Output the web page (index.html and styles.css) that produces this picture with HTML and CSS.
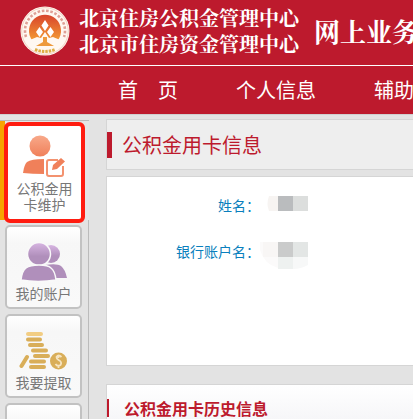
FILE: index.html
```html
<!DOCTYPE html>
<html lang="zh-CN">
<head>
<meta charset="utf-8">
<meta name="viewport" content="width=device-width, initial-scale=1">
<title>公积金用卡信息</title>
<link rel="stylesheet" href="styles.css">
</head>
<body>
<header class="header">
  <div class="brand">
    <svg class="logo" viewBox="0 0 50 50" aria-hidden="true">
      <defs>
        <linearGradient id="sun" x1="0" y1="0" x2="0" y2="1">
          <stop offset="0" stop-color="#d8432c"/>
          <stop offset="1" stop-color="#f39a35"/>
        </linearGradient>
      </defs>
      <circle cx="25" cy="25" r="24.5" fill="#fff8f2"/>
      <circle cx="25" cy="25" r="23.3" fill="none" stroke="#e8b9a0" stroke-width=".6"/>
      <path d="M6 31A20 20 0 1 1 44 31" fill="none" stroke="#dfa096" stroke-width="2.600" stroke-dasharray="2.6 1.7"/>
      <path d="M12 34A16 16 0 1 1 38 34Z" fill="url(#sun)"/>
      <path d="M25 14l3.600 5.500L25 25l-3.600-5.500zM19.500 21l3.500 5-3.500 5-3.500-5zM30.500 21l3.500 5-3.500 5-3.500-5z" fill="#fff"/>
      <path d="M25 26l4 6 4-1 12 5-9 7H14l-9-7 12-5 4 1z" fill="#fff8f2"/>
      <path d="M23 31h4v5l7 4H16l7-4z" fill="#ee9a3c"/>
      <path d="M15 43.500q10 4 20 0" fill="none" stroke="#dfae45" stroke-width="3" stroke-dasharray="2.500 1"/>
    </svg>
    <div class="org"><span>北京住房公积金管理中心</span><span>北京市住房资金管理中心</span></div>
    <div class="system">网上业务平台</div>
  </div>
  <nav class="nav">
    <a href="#">首　页</a>
    <a href="#">个人信息</a>
    <a href="#">辅助功能</a>
  </nav>
</header>
<div class="layout">
  <aside class="sidebar">
    <div class="active-tab">
      <a class="item current" href="#">
        <svg class="icon" viewBox="0 0 48 46" aria-hidden="true">
          <defs>
            <linearGradient id="orange" x1="0" y1="0" x2="0" y2="1">
              <stop offset="0" stop-color="#f8a98a"/>
              <stop offset="1" stop-color="#f0805a"/>
            </linearGradient>
          </defs>
          <circle cx="21" cy="14" r="10.500" fill="url(#orange)"/>
          <path d="M4 41q1-8 4-11 4-3 17-3v15q-12 0-21-1z" fill="#f0805a"/>
          <path d="M39 28H30q-2 0-2 2v12q0 2 2 2h12q2 0 2-2v-8" fill="none" stroke="#f3926f" stroke-width="2"/>
          <path d="M33 38l1-5 8-7 4 3.500-8 7.500z" fill="#f0805a"/>
        </svg>
        <span>公积金用<br>卡维护</span>
      </a>
    </div>
    <a class="item" href="#">
      <svg class="icon" viewBox="0 0 48 46" aria-hidden="true">
        <defs>
          <linearGradient id="purple" x1="0" y1="0" x2="0" y2="1">
            <stop offset="0" stop-color="#d7b5e2"/>
            <stop offset=".6" stop-color="#b08fbb"/>
          </linearGradient>
        </defs>
        <circle cx="32" cy="15" r="9" fill="url(#purple)"/>
        <path d="M26 26q12-2 16 1 4 3 6 12H30z" fill="#b08fbb"/>
        <circle cx="20" cy="15" r="11.500" fill="url(#purple)" stroke="#f9f9f9" stroke-width="1.500"/>
        <path d="M2 41q1-9 5-12 4-3 13-3t12 3q4 3 5 12-18 3-35 0z" fill="#b08fbb" stroke="#f9f9f9" stroke-width="1.500"/>
      </svg>
      <span>我的账户</span>
    </a>
    <a class="item" href="#">
      <svg class="icon" viewBox="0 0 48 46" aria-hidden="true">
        <g fill="none" stroke="#d9ae59" stroke-width="4" stroke-linecap="round">
          <path d="M9 6h13" stroke="#f2cd83"/>
          <path d="M9 11.500h12M11 17h12M14 22.500h13M16 28h13M12 33.500h13M12 39h13M8 29L2.500 38"/>
        </g>
        <circle cx="39.500" cy="33" r="8.500" fill="#d9ae59"/>
        <path d="M42.500 29q-3-3-5 0 0 2 2 3 4 2 2 5-3 2-5-1M39.500 27v3M39.500 37v3" fill="none" stroke="#f6e5c3" stroke-width="1.800"/>
      </svg>
      <span>我要提取</span>
    </a>
    <a class="item" href="#" aria-label="更多"></a>
  </aside>
  <main class="main">
    <section class="panel heading"><h1>公积金用卡信息</h1></section>
    <section class="panel details">
      <dl>
        <dt>姓名：</dt>
        <dd><svg class="mask" viewBox="0 0 48 27" aria-hidden="true"><path d="M9 0h9v15H9q-3-7 0-15z" fill="#f7f4f2"/><path d="M18 0h15v15H18z" fill="#babcbe"/><path d="M33 0h15v15H33z" fill="#dcdedd"/></svg></dd>
        <dt>银行账户名：</dt>
        <dd><svg class="mask" viewBox="0 0 48 27" aria-hidden="true"><path d="M0 0h18v26Q4 22 0 8z" fill="#fbfafa"/><path d="M3 0h15v15H3z" fill="#f8f6f5"/><path d="M18 0h15v15H18z" fill="#cacbcb"/><path d="M33 0h15v15H33z" fill="#e3e6e5"/><path d="M18 15h15v12H18z" fill="#eef1f0"/><path d="M33 15h15v8q-7 4-15 4z" fill="#f7f8f8"/></svg></dd>
      </dl>
    </section>
    <section class="panel history"><h2>公积金用卡历史信息</h2></section>
  </main>
</div>
</body>
</html>
```
FILE: styles.css
```css
* {
  box-sizing: border-box;
}

body {
  margin: 0;
  height: 100vh;
  overflow: hidden;
  display: flex;
  flex-direction: column;
  background: #e3e3e3;
  font-family: "Noto Sans CJK SC", sans-serif;
  font-size: 14px;
}

a {
  color: inherit;
  text-decoration: none;
}

h1, h2, dl, dd {
  margin: 0;
}

.header {
  flex: none;
  overflow: hidden;
  background: #bd1a2d;
  color: #fff;
  white-space: nowrap;
}

.brand {
  display: flex;
  align-items: center;
  height: 66px;
  padding: 0 0 4px 20px;
  border-bottom: 1px solid #fff;
}

.logo {
  flex: none;
  width: 50px;
  height: 50px;
}

.org {
  display: flex;
  flex-direction: column;
  margin-left: 9px;
  font-family: "Noto Serif CJK SC", "Noto Sans CJK SC", serif;
  font-size: 20px;
  font-weight: 700;
  line-height: 26px;
}

.system {
  margin-left: 15px;
  font-family: "Noto Serif CJK SC", "Noto Sans CJK SC", serif;
  font-size: 26px;
  font-weight: 700;
  line-height: 36px;
}

.nav {
  display: flex;
  gap: 58px;
  padding-left: 118px;
  font-size: 20px;
  line-height: 48px;
}

.layout {
  flex: 1 0 auto;
  display: flex;
  border-top: 1px solid #d0d0d0;
}

.sidebar {
  flex: none;
  width: 89px;
  margin-top: 5px;
  border-top: 1px solid #bbb;
  border-right: 1px solid #bbb;
}

.active-tab {
  width: 89px;
  height: 99px;
  margin-bottom: 5px;
  background: linear-gradient(to right, #f7a400 5px, #e5e5e5 5px);
  padding: 1px 4px 0 4px;
}

.item {
  display: flex;
  flex-direction: column;
  align-items: center;
  height: 84px;
  margin: 0 6px 5px 5px;
  padding-top: 12px;
  border: 2px solid #c2c2c2;
  border-radius: 5px;
  background: linear-gradient(#fff, #f7f7f7 20%, #f9f9f9);
  color: #777;
  line-height: 16px;
  text-align: center;
}

.item.current {
  height: 101px;
  margin: 0;
  padding-top: 6px;
  border: 4px solid #ff1c10;
  border-radius: 6px;
  background: #fff;
}

.icon {
  width: 48px;
  height: 46px;
  flex: none;
  margin-right: 2px;
}

.current .icon {
  margin-right: 4px;
  margin-bottom: 2px;
}

.main {
  flex: 1;
  min-width: 0;
  margin: 4px 0 0 17px;
}

.panel {
  border: 1px solid #d5d5d5;
  border-right: 0;
  background: #fff;
}

.heading {
  padding: 12px 0 11px;
  margin-bottom: 6px;
  background: #eee;
}

.heading h1 {
  padding-left: 10px;
  border-left: 5px solid #bd1a2d;
  color: #bd1a2d;
  font-size: 20px;
  font-weight: 400;
  line-height: 26px;
}

.details {
  height: 190px;
  padding-top: 15px;
  margin-bottom: 18px;
}

.details dl {
  display: grid;
  grid-template-columns: 153px 1fr;
  row-gap: 15px;
  color: #0a7fbd;
  line-height: 27px;
}

.details dt {
  text-align: right;
}

.mask {
  display: block;
  width: 48px;
  height: 27px;
  margin-top: 4px;
}

.history {
  padding: 14px 0;
  background: linear-gradient(#fff, #f3f3f6);
}

.history h2 {
  padding-left: 15px;
  border-left: 2px solid #bd1a2d;
  color: #bd1a2d;
  font-size: 16px;
  font-weight: 700;
  line-height: 18px;
}
```
